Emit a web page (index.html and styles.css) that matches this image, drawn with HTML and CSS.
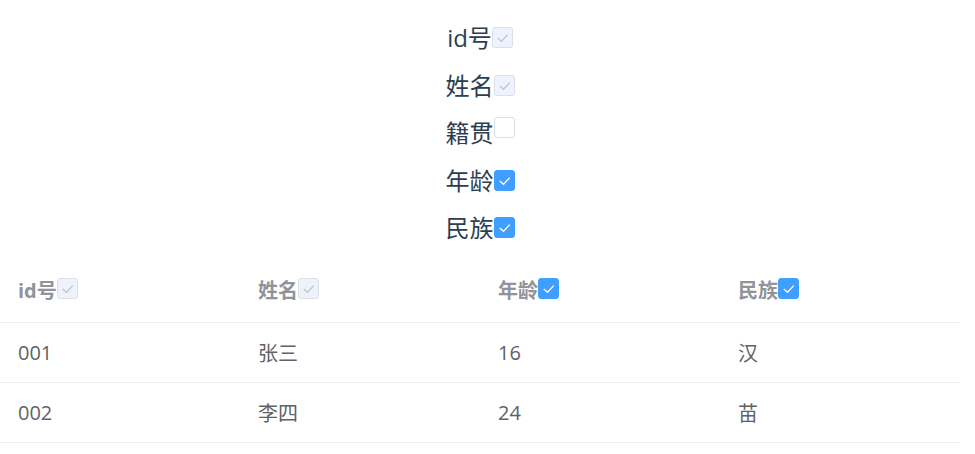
FILE: index.html
```html
<!DOCTYPE html>
<html lang="zh-CN">
<head>
  <meta charset="UTF-8">
  <meta name="viewport" content="width=device-width, initial-scale=1.0">
  <title>列显示设置</title>
  <link rel="stylesheet" href="styles.css">
</head>
<body>
  <div class="app">
    <div class="options">
      <div class="option">id号<span class="check is-disabled is-checked"><svg viewBox="0 0 20 20"><polyline points="5,10.5 9,14 15.5,7"/></svg></span></div>
      <div class="option">姓名<span class="check is-disabled is-checked"><svg viewBox="0 0 20 20"><polyline points="5,10.5 9,14 15.5,7"/></svg></span></div>
      <div class="option">籍贯<span class="check"></span></div>
      <div class="option">年龄<span class="check is-checked"><svg viewBox="0 0 20 20"><polyline points="5,10.5 9,14 15.5,7"/></svg></span></div>
      <div class="option">民族<span class="check is-checked"><svg viewBox="0 0 20 20"><polyline points="5,10.5 9,14 15.5,7"/></svg></span></div>
    </div>

    <table class="data-table">
      <thead>
        <tr>
          <th>id号<span class="check is-disabled is-checked"><svg viewBox="0 0 20 20"><polyline points="5,10.5 9,14 15.5,7"/></svg></span></th>
          <th>姓名<span class="check is-disabled is-checked"><svg viewBox="0 0 20 20"><polyline points="5,10.5 9,14 15.5,7"/></svg></span></th>
          <th>年龄<span class="check is-checked"><svg viewBox="0 0 20 20"><polyline points="5,10.5 9,14 15.5,7"/></svg></span></th>
          <th>民族<span class="check is-checked"><svg viewBox="0 0 20 20"><polyline points="5,10.5 9,14 15.5,7"/></svg></span></th>
        </tr>
      </thead>
      <tbody>
        <tr>
          <td>001</td>
          <td>张三</td>
          <td>16</td>
          <td>汉</td>
        </tr>
        <tr>
          <td>002</td>
          <td>李四</td>
          <td>24</td>
          <td>苗</td>
        </tr>
      </tbody>
    </table>
  </div>
</body>
</html>
```

FILE: styles.css
```css
body {
  margin: 0;
  padding: 0;
  background-color: #fff;
  font-family: "Open Sans", "Noto Sans CJK SC", sans-serif;
}

.app {
  width: 960px;
  color: #2c3e50;
}

.options {
  padding-top: 14px;
}

.option {
  height: 47.5px;
  line-height: 47.5px;
  text-align: center;
  font-size: 24px;
}

.check {
  display: inline-block;
  box-sizing: border-box;
  width: 21px;
  height: 21px;
  margin: 3px 0 4px;
  vertical-align: baseline;
  border: 1px solid #dcdfe6;
  border-radius: 3px;
  background-color: #fff;
  line-height: 0;
}

.check svg {
  width: 19px;
  height: 19px;
  fill: none;
  stroke: #fff;
  stroke-width: 1.4;
}

.check.is-checked {
  background-color: #409eff;
  border-color: #409eff;
}

.check.is-disabled.is-checked {
  background-color: #edf2fc;
  border-color: #dcdfe6;
}

.check.is-disabled svg {
  stroke: #c0c4cc;
}

.data-table {
  width: 960px;
  margin-top: 11.5px;
  border-collapse: collapse;
  table-layout: fixed;
  font-size: 20px;
}

.data-table th,
.data-table td {
  height: 59px;
  padding: 0 18px;
  text-align: left;
  border-bottom: 1px solid #ebeef5;
}

.data-table th {
  height: 53px;
  padding-bottom: 6px;
  color: #909399;
  font-weight: bold;
}

.data-table td {
  color: #606266;
}
```
